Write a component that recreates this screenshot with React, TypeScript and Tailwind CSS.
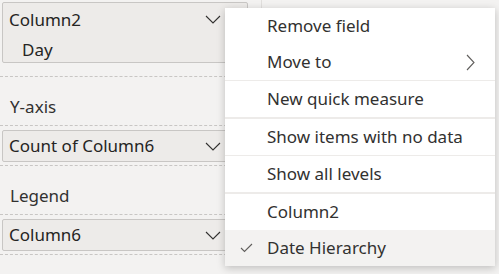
import { ReactNode } from "react";

const font = { fontFamily: '"Segoe UI", "Noto Sans", "Open Sans", sans-serif' };

function Chevron() {
  return (
    <svg width="16" height="9" viewBox="0 0 16 9" className="shrink-0">
      <path d="M1 1 L8 8 L15 1" fill="none" stroke="#323130" strokeWidth="1.1" />
    </svg>
  );
}

function FieldBox({ children }: { children: ReactNode }) {
  return (
    <div className="ml-[2px] w-[246px] rounded-[2px] border border-[#c8c6c4] bg-[#edebe9] text-[#252423]">
      {children}
    </div>
  );
}

function Dashed() {
  return <div className="w-[252px] border-t border-dashed border-[#c8c6c4]" />;
}

function MenuItem({
  label,
  arrow,
  checked,
  active,
}: {
  label: string;
  arrow?: boolean;
  checked?: boolean;
  active?: boolean;
}) {
  return (
    <div
      className={`flex h-[36px] items-center pr-[20px] ${active ? "bg-[#f3f2f1]" : ""}`}
    >
      <div className="flex w-[42px] justify-center">
        {checked && (
          <svg width="13" height="10" viewBox="0 0 13 10">
            <path d="M1 5 L4.5 8.5 L12 1" fill="none" stroke="#605e5c" strokeWidth="1.1" />
          </svg>
        )}
      </div>
      <span className="flex-1">{label}</span>
      {arrow && (
        <svg width="9" height="17" viewBox="0 0 9 17">
          <path d="M1 1 L8 8.5 L1 16" fill="none" stroke="#605e5c" strokeWidth="1.1" />
        </svg>
      )}
    </div>
  );
}

export default function App() {
  return (
    <div
      className="relative h-[274px] w-[499px] overflow-hidden bg-[#f3f2f1] text-[17px] text-[#323130]"
      style={font}
    >
      <div className="flex">
        {/* 左側のフィールド一覧 */}
        <div className="w-[262px] border-r border-[#e1dfdd] pt-[2px]">
          <FieldBox>
            <div className="flex h-[33px] items-center justify-between pl-[6px] pr-[26px]">
              <span>Column2</span>
              <Chevron />
            </div>
            <div className="flex h-[26px] items-start pl-[19px] pt-[1px]">
              <span>Day</span>
            </div>
          </FieldBox>
          <div className="h-[13px]" />
          <Dashed />
          <div className="flex h-[48px] items-center pl-[10px] pt-[12px]">Y-axis</div>
          <div className="mb-[4px]">
            <Dashed />
          </div>
          <FieldBox>
            <div className="flex h-[30px] items-center justify-between pl-[6px] pr-[26px]">
              <span>Count of Column6</span>
              <Chevron />
            </div>
          </FieldBox>
          <div className="h-[3px]" />
          <Dashed />
          <div className="flex h-[48px] items-center pl-[10px] pt-[12px]">Legend</div>
          <div className="mb-[4px]">
            <Dashed />
          </div>
          <FieldBox>
            <div className="flex h-[30px] items-center justify-between pl-[6px] pr-[26px]">
              <span>Column6</span>
              <Chevron />
            </div>
          </FieldBox>
          <div className="h-[3px]" />
          <Dashed />
        </div>
      </div>

      {/* コンテキストメニュー */}
      <div className="absolute left-[225px] top-[8px] w-[270px] bg-white shadow-[0_2px_8px_rgba(0,0,0,0.22)]">
        <MenuItem label="Remove field" />
        <MenuItem label="Move to" arrow />
        <div className="h-px bg-[#edebe9]" />
        <MenuItem label="New quick measure" />
        <div className="h-[2px] bg-[#edebe9]" />
        <MenuItem label="Show items with no data" />
        <div className="h-px bg-[#edebe9]" />
        <MenuItem label="Show all levels" />
        <div className="h-[2px] bg-[#edebe9]" />
        <MenuItem label="Column2" />
        <MenuItem label="Date Hierarchy" checked active />
      </div>
    </div>
  );
}
